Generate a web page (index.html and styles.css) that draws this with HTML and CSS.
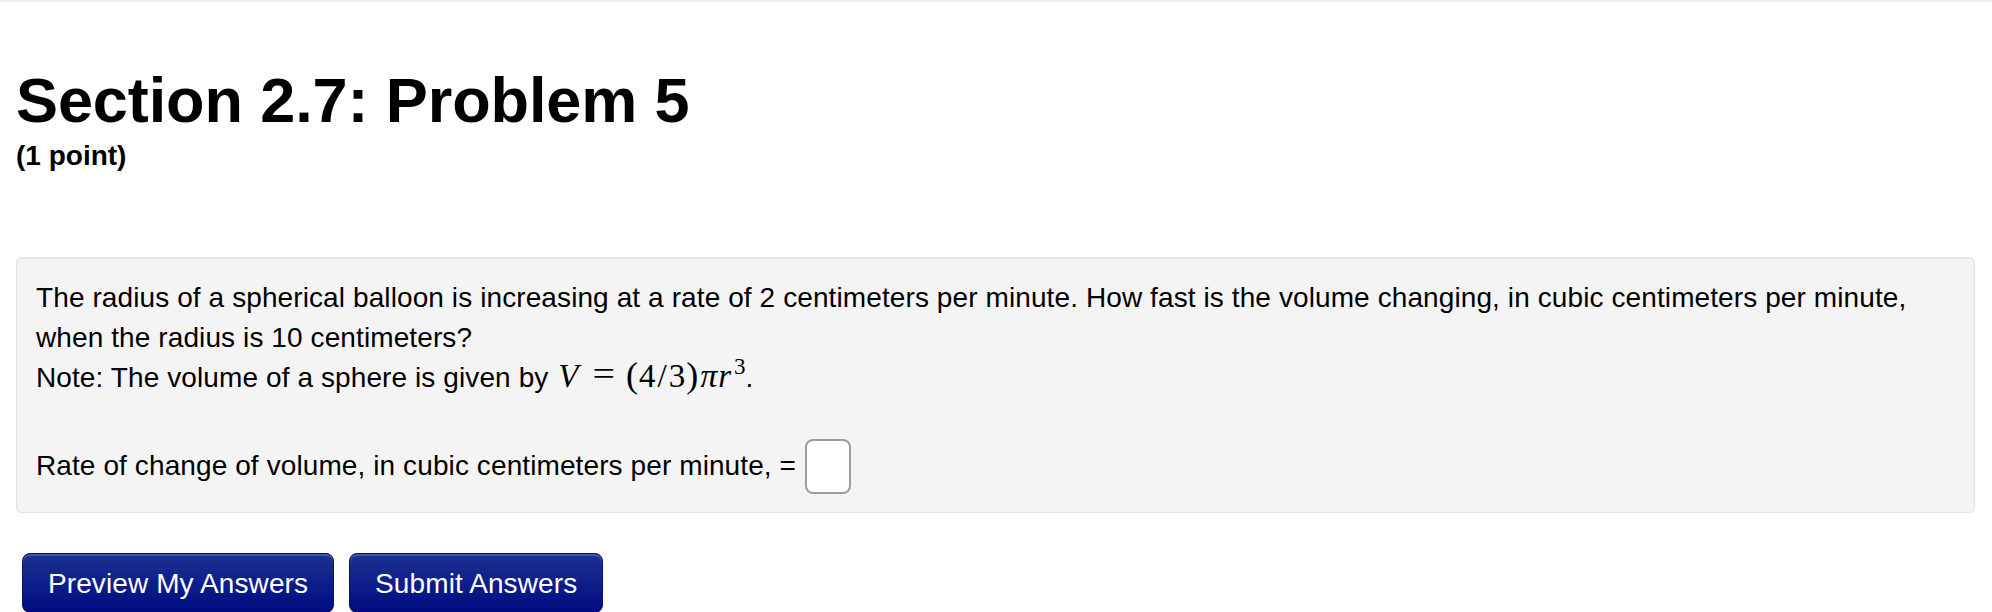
FILE: index.html
```html
<!DOCTYPE html>
<html lang="en">
<head>
<meta charset="utf-8">
<title>Section 2.7: Problem 5</title>
<link rel="stylesheet" href="styles.css">
</head>
<body>
<div class="topbar"></div>
<main class="page">
  <header class="problem-head">
    <h2 class="problem-title">Section 2.7: Problem 5</h2>
    <div class="problem-points">(1 point)</div>
  </header>
  <section class="problem-box">
    <p class="problem-text">The radius of a spherical balloon is increasing at a rate of 2 centimeters per minute. How fast is the volume changing, in cubic centimeters per minute, when the radius is 10 centimeters?<br>Note: The volume of a sphere is given by <span class="math"><span class="mi v">V</span><span class="mo">=</span><span class="paren">(</span><span class="mn">4</span><span class="slash">/</span><span class="mn">3</span><span class="paren">)</span><span class="mi pi">π</span><span class="mi r">r</span><span class="msup">3</span></span>.</p>
    <div class="answer-row">
      <span class="answer-label">Rate of change of volume, in cubic centimeters per minute, =</span>
      <input class="answer-input" type="text" aria-label="answer">
    </div>
  </section>
  <div class="actions">
    <button class="btn" type="button">Preview My Answers</button>
    <button class="btn" type="button">Submit Answers</button>
  </div>
</main>
</body>
</html>
```
FILE: styles.css
```css
html, body {
  margin: 0;
  padding: 0;
  background: #ffffff;
}
body {
  font-family: "Liberation Sans", Arial, Helvetica, sans-serif;
  color: #000;
  font-size: 28px;
  line-height: 40px;
  overflow: hidden;
}
.topbar {
  height: 2px;
  background: #f0f0f0;
}
.page {
  padding: 0 17px 0 16px;
}
.problem-head {
  padding-top: 64px;
}
.problem-title {
  margin: 0;
  font-size: 63px;
  line-height: 69px;
  font-weight: bold;
  letter-spacing: -0.1px;
}
.problem-points {
  font-weight: bold;
  font-size: 28px;
  line-height: 40px;
  margin-top: 1px;
}
.problem-box {
  margin-top: 81px;
  background: #f4f4f4;
  border: 1px solid #e3e3e3;
  border-radius: 5px;
  box-shadow: inset 0 1px 2px rgba(0, 0, 0, 0.04);
  padding: 20px 19px 18px 19px;
  letter-spacing: 0.1px;
}
.problem-text {
  margin: 0 0 40px 0;
}
.math {
  font-family: "Liberation Serif", "DejaVu Serif", serif;
  font-size: 33px;
  line-height: 32px;
  letter-spacing: 0;
}
.mi {
  font-style: italic;
}
.mi.v {
  margin-left: 2px;
}
.mo {
  display: inline-block;
  font-size: 40px;
  line-height: 32px;
  margin: 0 10px 0 14px;
  transform: scaleY(0.85);
}
.paren {
  font-size: 36px;
  padding: 0 1px;
}
.slash {
  padding: 0 2px;
}
.mi.pi {
  margin-left: 1px;
  font-size: 34px;
}
.mi.r {
  margin-left: 1px;
}
.msup {
  font-size: 23px;
  vertical-align: 13px;
  line-height: 0;
  margin-left: 3px;
}
.answer-row {
  display: flex;
  align-items: center;
  height: 56px;
}
.answer-label {
  white-space: nowrap;
}
.answer-input {
  box-sizing: border-box;
  margin-left: 9px;
  width: 46px;
  height: 55px;
  border: 2px solid #9c9c9c;
  border-radius: 8px;
  background: #fff;
  padding: 0;
}
.actions {
  margin-top: 40px;
  margin-left: 6px;
  display: flex;
  gap: 15px;
}
.btn {
  font-family: "Liberation Sans", Arial, Helvetica, sans-serif;
  font-size: 28px;
  line-height: 40px;
  letter-spacing: 0.1px;
  color: #fff;
  padding: 10px 25px 8px 25px;
  border: 1px solid #06106a;
  border-radius: 8px;
  background-color: #000a80;
  background-image: linear-gradient(to bottom, #1d3291, #000b80);
  box-shadow: inset 0 2px 0 rgba(255, 255, 255, 0.18);
  cursor: pointer;
}
```
